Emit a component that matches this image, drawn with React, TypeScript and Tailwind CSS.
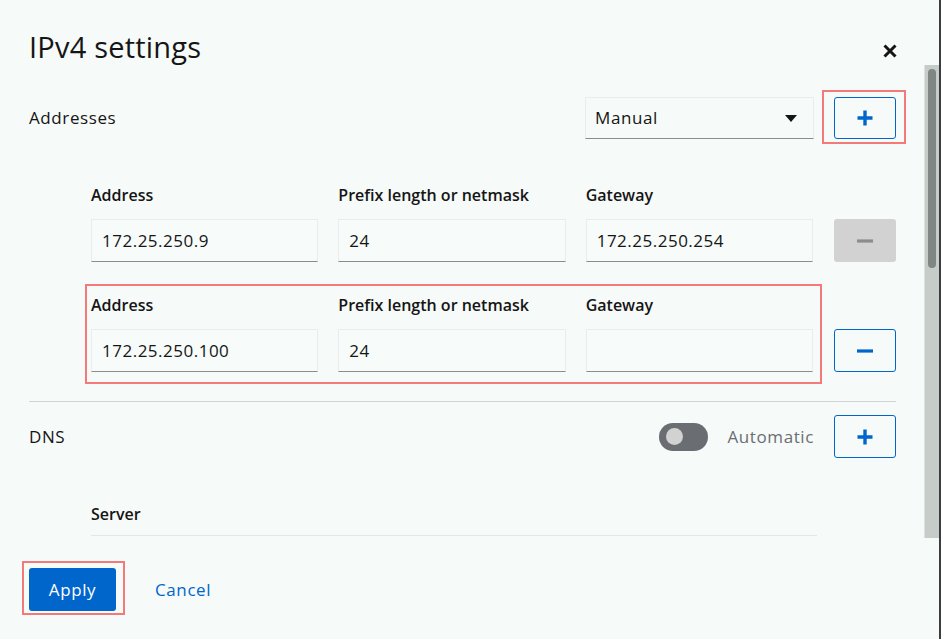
import React from "react";

const FONT = { fontFamily: '"Open Sans", "Liberation Sans", sans-serif' };

const ROWS = [
  { address: "172.25.250.9", prefix: "24", gateway: "172.25.250.254", disabled: true, marked: false },
  { address: "172.25.250.100", prefix: "24", gateway: "", disabled: false, marked: true },
];

const PlusIcon = () => (
  <svg width="18" height="18" viewBox="0 0 18 18">
    <path d="M9 1.5v15M1.5 9h15" stroke="#0066cc" strokeWidth="3.4" />
  </svg>
);

const MinusIcon: React.FC<{ color: string }> = ({ color }) => (
  <svg width="18" height="18" viewBox="0 0 18 18">
    <path d="M1 9h16" stroke={color} strokeWidth="3.2" />
  </svg>
);

const Mark: React.FC<{ className: string }> = ({ className }) => (
  <span className={`pointer-events-none absolute border-2 border-[#f47a7a] ${className}`} />
);

const Field: React.FC<{ value: string }> = ({ value }) => (
  <div className="flex h-[43px] items-center border border-[#ececec] border-b-[#8a8d90] bg-[#f7fbf9] px-[10px] text-[17px] tracking-[0.5px] text-[#151515]">
    {value}
  </div>
);

const Label: React.FC<{ children: React.ReactNode }> = ({ children }) => (
  <div className="text-[16px] font-semibold leading-[22px] text-[#151515]">{children}</div>
);

const AddressRow: React.FC<{ r: (typeof ROWS)[number] }> = ({ r }) => (
  <div className="flex items-end gap-[21px] pl-[62px]">
    <div className="relative grid flex-1 grid-cols-3 gap-x-[20px] gap-y-[13px]">
      {r.marked && <Mark className="-left-[6px] -right-[9px] -top-[10px] -bottom-[12px]" />}
      <Label>Address</Label>
      <Label>Prefix length or netmask</Label>
      <Label>Gateway</Label>
      <Field value={r.address} />
      <Field value={r.prefix} />
      <Field value={r.gateway} />
    </div>
    {r.disabled ? (
      <div className="flex h-[43px] w-[62px] items-center justify-center rounded-[3px] bg-[#d2d2d2]">
        <MinusIcon color="#8a8d90" />
      </div>
    ) : (
      <div className="flex h-[43px] w-[62px] items-center justify-center rounded-[3px] border border-[#0066cc]">
        <MinusIcon color="#0066cc" />
      </div>
    )}
  </div>
);

export default function App() {
  return (
    <div
      className="flex h-[639px] w-[941px] flex-col overflow-hidden border-r-2 border-[#3b3e40] bg-[#f6faf8]"
      style={FONT}
    >
      {/* Header */}
      <div className="flex h-[65px] items-start justify-between pl-[29px] pr-[42px] pt-[27px]">
        <h1 className="text-[29px] leading-[40px] tracking-[0.2px] text-[#151515]">IPv4 settings</h1>
        <svg width="14" height="14" viewBox="0 0 14 14" className="mt-[17px]">
          <path d="M1.5 1.5l11 11M12.5 1.5l-11 11" stroke="#151515" strokeWidth="3" />
        </svg>
      </div>

      {/* Scrollable body */}
      <div className="flex h-[473px]">
        <div className="flex-1 overflow-hidden pl-[29px] pr-[28px] text-[17px] tracking-[0.6px]">
          {/* Addresses */}
          <div className="mt-[32px] flex items-center">
            <span className="text-[#151515]">Addresses</span>
            <div className="ml-auto flex h-[42px] w-[229px] items-center justify-between border border-[#ececec] border-b-[#8a8d90] pl-[9px] pr-[16px] text-[#151515]">
              Manual
              <svg width="12" height="7" viewBox="0 0 12 7">
                <path d="M0 0h12L6 7z" fill="#151515" />
              </svg>
            </div>
            <div className="relative ml-[20px]">
              <Mark className="-left-[12px] -right-[10px] -top-[7px] -bottom-[5px]" />
              <div className="flex h-[42px] w-[62px] items-center justify-center rounded-[3px] border border-[#0066cc]">
                <PlusIcon />
              </div>
            </div>
          </div>

          <div className="mt-[45px] flex flex-col gap-[32px] tracking-normal">
            {ROWS.map((r) => (
              <AddressRow key={r.address} r={r} />
            ))}
          </div>

          <div className="mt-[29px] h-px bg-[#d2d2d2]" />

          {/* DNS */}
          <div className="mt-[13px] flex items-center">
            <span className="text-[#151515]">DNS</span>
            <div className="ml-auto flex h-[28px] w-[49px] items-center rounded-full bg-[#6a6e73] pl-[7px]">
              <span className="h-[17px] w-[17px] rounded-full bg-[#d2d2d2]" />
            </div>
            <span className="ml-[19px] text-[#6a6e73]">Automatic</span>
            <div className="ml-[20px] flex h-[43px] w-[62px] items-center justify-center rounded-[3px] border border-[#0066cc]">
              <PlusIcon />
            </div>
          </div>

          <div className="mt-[45px] pl-[62px] text-[16px] font-semibold leading-[22px] tracking-normal text-[#151515]">
            Server
          </div>
          <div className="ml-[62px] mr-[79px] mt-[10px] h-px bg-[#e3e7e5]" />
        </div>

        {/* Scrollbar */}
        <div className="w-[15px] border-l border-[#dde2df] bg-[#c6ccc8] pl-[3px] pt-[4px]">
          <div className="h-[199px] w-[8px] rounded-full bg-[#7e8784]" />
        </div>
      </div>

      {/* Footer */}
      <div className="flex items-center gap-[39px] pl-[29px] pt-[30px] text-[17px] tracking-[0.6px]">
        <div className="relative">
          <Mark className="-left-[7px] -right-[9px] -top-[7px] -bottom-[4px]" />
          <div className="flex h-[43px] w-[87px] items-center justify-center rounded-[3px] bg-[#0066cc] text-white">
            Apply
          </div>
        </div>
        <span className="text-[#0066cc]">Cancel</span>
      </div>
    </div>
  );
}
